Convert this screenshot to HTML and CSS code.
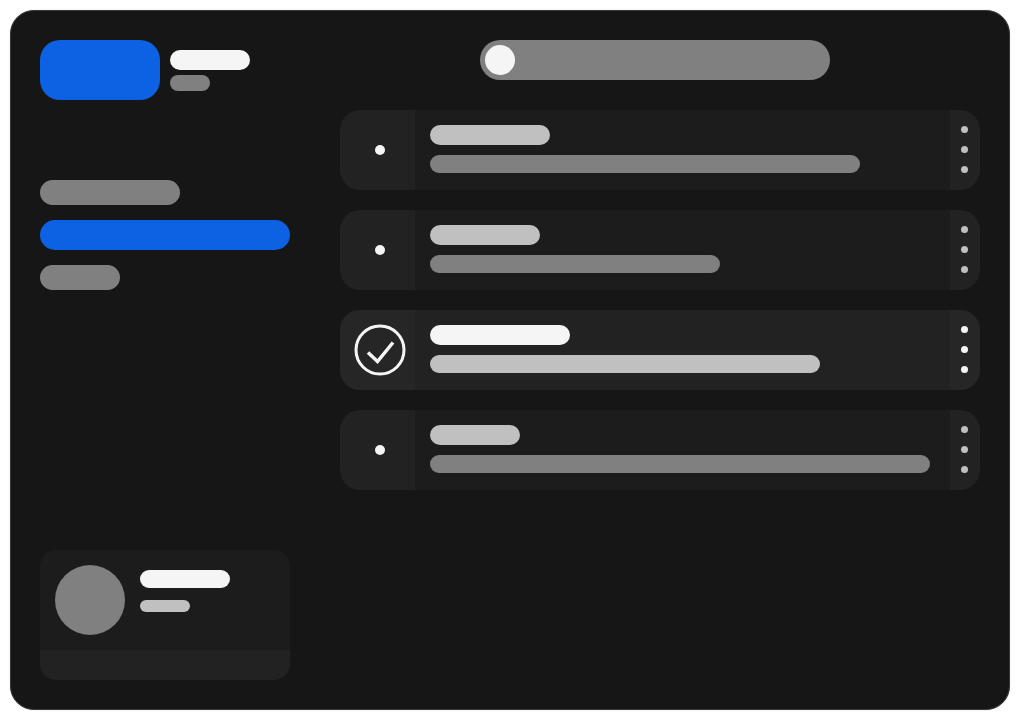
FILE: index.html
```html
<!DOCTYPE html>
<html lang="en">
<head>
    <meta charset="UTF-8">
    <meta name="viewport" content="width=device-width, initial-scale=1.0">
    <title>Task list</title>
    <link rel="stylesheet" href="styles.css">
</head>
<body>
    <div class="app-frame">
        <aside class="sidebar">
            <div class="brand">
                <div class="brand-logo"></div>
                <div class="brand-text">
                    <div class="bar brand-name"></div>
                    <div class="bar brand-sub"></div>
                </div>
            </div>

            <nav class="nav">
                <div class="bar nav-item nav-item-first"></div>
                <div class="bar nav-item nav-item-active"></div>
                <div class="bar nav-item nav-item-last"></div>
            </nav>

            <div class="profile">
                <div class="profile-main">
                    <div class="avatar"></div>
                    <div class="profile-text">
                        <div class="bar profile-name"></div>
                        <div class="bar profile-role"></div>
                    </div>
                </div>
                <div class="profile-footer"></div>
            </div>
        </aside>

        <main class="content">
            <div class="toggle">
                <div class="toggle-knob"></div>
            </div>

            <div class="rows">
                <div class="row">
                    <div class="row-status"><span class="status-dot"></span></div>
                    <div class="row-body">
                        <div class="bar row-title w-120"></div>
                        <div class="bar row-sub w-430"></div>
                    </div>
                    <div class="row-menu"><span></span><span></span><span></span></div>
                </div>

                <div class="row">
                    <div class="row-status"><span class="status-dot"></span></div>
                    <div class="row-body">
                        <div class="bar row-title w-110"></div>
                        <div class="bar row-sub w-290"></div>
                    </div>
                    <div class="row-menu"><span></span><span></span><span></span></div>
                </div>

                <div class="row row-active">
                    <div class="row-status">
                        <svg class="check-icon" viewBox="0 0 52 52" width="52" height="52">
                            <circle cx="26" cy="26" r="24" fill="none" stroke="#f5f5f5" stroke-width="3"/>
                            <path d="M14 28.5 L23.5 37.5 L39 18.5" fill="none" stroke="#f5f5f5" stroke-width="3.5"/>
                        </svg>
                    </div>
                    <div class="row-body">
                        <div class="bar row-title w-140"></div>
                        <div class="bar row-sub w-390"></div>
                    </div>
                    <div class="row-menu"><span></span><span></span><span></span></div>
                </div>

                <div class="row">
                    <div class="row-status"><span class="status-dot"></span></div>
                    <div class="row-body">
                        <div class="bar row-title w-90"></div>
                        <div class="bar row-sub w-500"></div>
                    </div>
                    <div class="row-menu"><span></span><span></span><span></span></div>
                </div>
            </div>
        </main>
    </div>
</body>
</html>
```

FILE: styles.css
```css
:root {
    --color-blue: #0c62e2;
    --color-bg: #161616;
    --color-panel: #1c1c1c;
    --color-panel-light: #222222;
    --color-panel-lighter: #262626;
    --color-white: #f5f5f5;
    --color-light: #c0c0c0;
    --color-gray: #808080;
}

* {
    margin: 0;
    padding: 0;
    box-sizing: border-box;
}

body {
    background: #ffffff;
    padding: 10px;
}

.app-frame {
    width: 1000px;
    height: 700px;
    display: flex;
    gap: 50px;
    padding: 29px;
    background: var(--color-bg);
    border: 1px solid #3a3a3a;
    border-radius: 24px;
    box-shadow: 0 0 1px rgba(0, 0, 0, 0.4);
}

.bar {
    border-radius: 999px;
}

/* Sidebar */
.sidebar {
    width: 250px;
    display: flex;
    flex-direction: column;
}

.brand {
    display: flex;
    gap: 10px;
}

.brand-logo {
    width: 120px;
    height: 60px;
    background: var(--color-blue);
    border-radius: 20px;
}

.brand-text {
    display: flex;
    flex-direction: column;
    gap: 5px;
    padding-top: 10px;
}

.brand-name {
    width: 80px;
    height: 20px;
    background: var(--color-white);
}

.brand-sub {
    width: 40px;
    height: 16px;
    background: var(--color-gray);
}

.nav {
    display: flex;
    flex-direction: column;
    margin-top: 80px;
}

.nav-item {
    height: 25px;
    background: var(--color-gray);
}

.nav-item-first {
    width: 140px;
}

.nav-item-active {
    width: 250px;
    height: 30px;
    margin: 15px 0;
    background: var(--color-blue);
}

.nav-item-last {
    width: 80px;
}

.profile {
    margin-top: auto;
    border-radius: 16px;
    overflow: hidden;
}

.profile-main {
    height: 100px;
    display: flex;
    gap: 15px;
    padding: 15px;
    background: var(--color-panel);
}

.avatar {
    width: 70px;
    height: 70px;
    background: var(--color-gray);
    border-radius: 50%;
}

.profile-text {
    display: flex;
    flex-direction: column;
    gap: 12px;
    padding-top: 5px;
}

.profile-name {
    width: 90px;
    height: 18px;
    background: var(--color-white);
}

.profile-role {
    width: 50px;
    height: 12px;
    background: var(--color-light);
}

.profile-footer {
    height: 30px;
    background: var(--color-panel-light);
}

/* Main column */
.content {
    width: 640px;
    display: flex;
    flex-direction: column;
    gap: 30px;
}

.toggle {
    width: 350px;
    height: 40px;
    margin-left: 140px;
    padding: 5px;
    background: var(--color-gray);
    border-radius: 20px;
}

.toggle-knob {
    width: 30px;
    height: 30px;
    background: var(--color-white);
    border-radius: 50%;
}

.rows {
    display: flex;
    flex-direction: column;
    gap: 20px;
}

.row {
    height: 80px;
    display: flex;
    background: var(--color-panel);
    border-radius: 20px;
    overflow: hidden;
}

.row-status {
    width: 75px;
    display: flex;
    align-items: center;
    justify-content: center;
    padding-left: 5px;
    background: var(--color-panel-light);
}

.status-dot {
    width: 10px;
    height: 10px;
    background: var(--color-white);
    border-radius: 50%;
}

.check-icon {
    flex-shrink: 0;
}

.row-body {
    flex: 1;
    display: flex;
    flex-direction: column;
    gap: 10px;
    padding: 15px;
}

.row-title {
    height: 20px;
    background: var(--color-light);
}

.row-sub {
    height: 18px;
    background: var(--color-gray);
}

.row-menu {
    width: 30px;
    display: flex;
    flex-direction: column;
    align-items: center;
    justify-content: center;
    gap: 13px;
    padding: 0 1px 1px 0;
    background: var(--color-panel-light);
}

.row-menu span {
    width: 7px;
    height: 7px;
    background: var(--color-light);
    border-radius: 50%;
}

.row-active {
    background: var(--color-panel-light);
}

.row-active .row-status,
.row-active .row-menu {
    background: var(--color-panel-lighter);
}

.row-active .row-title {
    background: var(--color-white);
}

.row-active .row-sub {
    background: var(--color-light);
}

.row-active .row-menu span {
    background: var(--color-white);
}

.w-90 { width: 90px; }
.w-110 { width: 110px; }
.w-120 { width: 120px; }
.w-140 { width: 140px; }
.w-290 { width: 290px; }
.w-390 { width: 390px; }
.w-430 { width: 430px; }
.w-500 { width: 500px; }
```
